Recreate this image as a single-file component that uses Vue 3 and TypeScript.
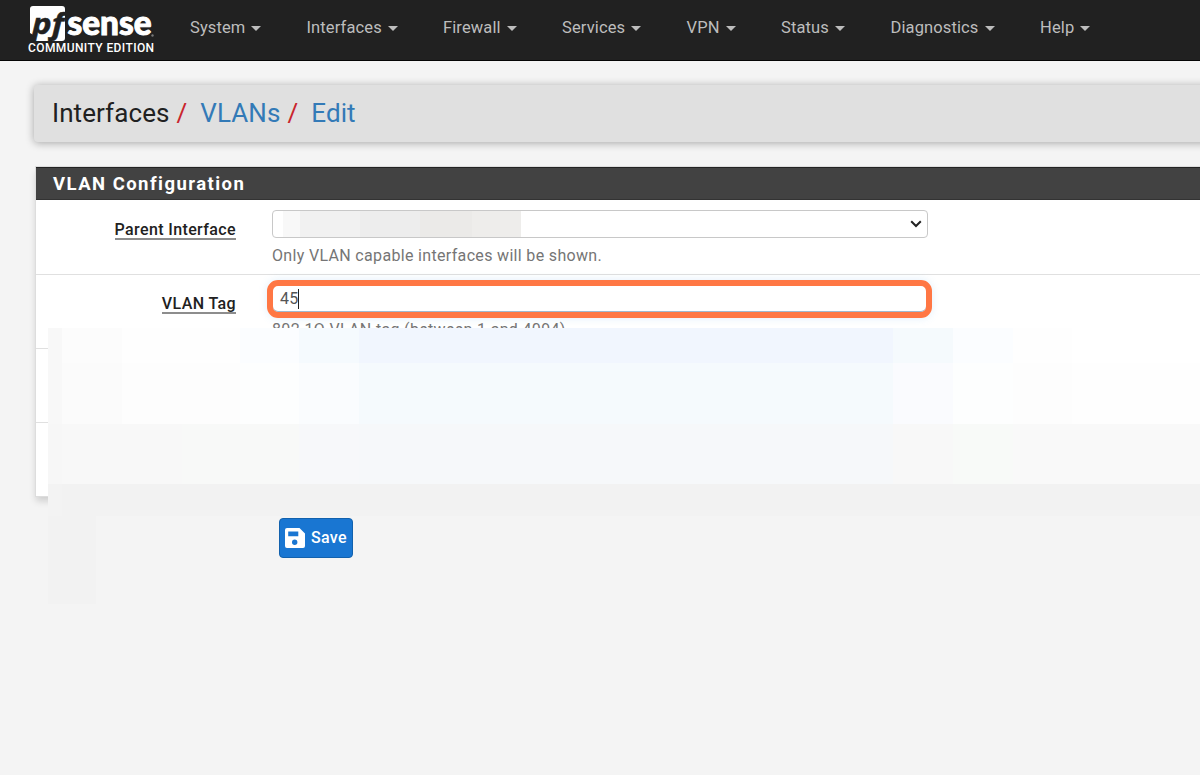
<script setup lang="ts">
const menu: string[] = ['System', 'Interfaces', 'Firewall', 'Services', 'VPN', 'Status', 'Diagnostics', 'Help']

// Colours of the redaction mosaic, one list per row of cells
const mosaic: string[][] = [
  ['#f8f8f8', '#fcfcfc', '#fefefe', '#fefefe', '#fbfdff', '#f5fafe', '#f1f6fe', '#f5fafd', '#fbfdff', '#fefefe', '#ffffff'],
  ['#f8f8f8', '#fbfbfb', '#fdfdfd', '#fdfdfd', '#fdfefe', '#fafcfe', '#f5fafd', '#fafbfe', '#fdfefe', '#fdfdfd', '#fefefe'],
  ['#f7f7f7', '#f8f8f8', '#f8f8f8', '#f8f9f8', '#f8f9f8', '#f7f8fa', '#f6f8fa', '#f8f8f8', '#f8faf8', '#f9f9f9', '#f9f9f9'],
  ['#f3f3f3', '#f2f2f2', '#f2f2f2', '#f2f2f2', '#f2f2f2', '#f2f2f2', '#f2f2f2', '#f2f2f2', '#f2f2f2', '#f2f2f2', '#f2f2f2'],
]
const cells: string[] = mosaic.flat()
</script>

<template>
  <div class="page">
    <header class="navbar">
      <div class="brand">
        <svg class="logo" width="130" height="36" viewBox="0 0 130 36">
          <path d="M5 0H34Q37 0 37 3V32Q37 35 34 35H6L7 30L2 27V3Q2 0 5 0Z" fill="#fff" />
          <text class="pf" x="4" y="28" textLength="32" lengthAdjust="spacingAndGlyphs">pf</text>
          <text class="sense" x="39.500" y="28.500" textLength="84" lengthAdjust="spacingAndGlyphs">sense</text>
          <circle cx="124.500" cy="29.500" r="1.200" fill="#777" />
        </svg>
        <span class="edition">COMMUNITY EDITION</span>
      </div>
      <nav class="menu">
        <a v-for="item in menu" :key="item" class="menu-item">{{ item }}<i class="caret"></i></a>
      </nav>
    </header>

    <div class="breadcrumb">
      <span>Interfaces</span><span class="slash">/</span><a>VLANs</a><span class="slash">/</span><a>Edit</a>
    </div>

    <section class="panel">
      <h2 class="panel-title">VLAN Configuration</h2>
      <div class="row">
        <div class="label"><span>Parent Interface</span></div>
        <div class="field">
          <div class="select">
            <div class="masked"><i></i><i></i><i></i><i></i><i></i></div>
            <svg width="12" height="8" viewBox="0 0 12 8"><path d="M1.2 1.2L6 6L10.8 1.2" fill="none" stroke="#222" stroke-width="2" /></svg>
          </div>
          <p class="help">Only VLAN capable interfaces will be shown.</p>
        </div>
      </div>
      <div class="row">
        <div class="label"><span>VLAN Tag</span></div>
        <div class="field">
          <div class="input"><span>45</span><i class="cursor"></i></div>
          <p class="help tag-help">802.1Q VLAN tag (between 1 and 4094).</p>
        </div>
      </div>
      <div class="row"></div>
      <div class="row"></div>
    </section>

    <div class="mosaic">
      <i v-for="(color, index) in cells" :key="index" :style="{ background: color }"></i>
    </div>
    <div class="mosaic-tail"></div>

    <button class="save">
      <svg width="20" height="20" viewBox="0 0 20 20">
        <path fill="#fff" fill-rule="evenodd" d="M2 0H14.5L20 5.500V18Q20 20 18 20H2Q0 20 0 18V2Q0 0 2 0ZM3.200 3.500V8.300H13.300V3.500ZM9.700 11.500A2.700 2.700 0 1 0 9.700 16.900A2.700 2.700 0 1 0 9.700 11.500Z" />
      </svg>
      <span>Save</span>
    </button>
  </div>
</template>

<style>
body {
  margin: 0;
  background: #f4f4f4;
}
</style>

<style scoped>
* {
  box-sizing: border-box;
}
.page {
  position: relative;
  height: 775px;
  overflow: hidden;
  background: #f4f4f4;
  font-family: Roboto, sans-serif;
  font-size: 16px;
  color: #212121;
}
.navbar {
  display: flex;
  height: 61px;
  background: #212121;
  border-bottom: 1px solid #050505;
}
.brand {
  width: 190px;
  padding: 6px 0 0 28px;
}
.logo {
  display: block;
  overflow: visible;
}
.pf {
  font: italic 700 29px "Open Sans", sans-serif;
  fill: #212121;
  stroke: #212121;
  stroke-width: 0.5px;
}
.sense {
  font: 900 34px Lato, sans-serif;
  fill: #fff;
  stroke: #fff;
  stroke-width: 1px;
}
.edition {
  display: block;
  font-size: 12px;
  line-height: 12px;
  font-weight: 500;
  letter-spacing: 0.4px;
  white-space: nowrap;
  color: #fff;
}
.menu {
  display: grid;
  grid-template-columns: 116.5px 136.5px 119px 124.5px 94.5px 109.5px 149.5px 80px;
  height: 55px;
  align-items: center;
}
.menu-item {
  display: flex;
  align-items: center;
  color: #bdbdbd;
  font-size: 16.5px;
  letter-spacing: 0.12px;
}
.caret {
  margin: 1px 0 0 6px;
  border: 5px solid transparent;
  border-top-color: #bdbdbd;
  border-bottom: 0;
}
.breadcrumb {
  display: flex;
  align-items: center;
  width: 1180px;
  height: 57px;
  margin: 24px 0 0 34px;
  padding: 0 0 2px 18px;
  border-radius: 4px;
  background: #e0e0e0;
  box-shadow: 0 1px 9px rgba(0, 0, 0, 0.33);
  font-size: 26px;
  letter-spacing: 0.08px;
}
.breadcrumb a {
  color: #337ab7;
}
.slash {
  margin: 0 13px 0 7px;
  color: #c9252d;
}
.panel {
  width: 1180px;
  height: 331px;
  margin: 24px 0 0 35px;
  border: 1px solid #ddd;
  background: #fff;
  box-shadow: 0 5px 7px -1px rgba(0, 0, 0, 0.16);
}
.panel-title {
  height: 33px;
  margin: 0;
  padding-left: 17px;
  background: #424242;
  border-top: 1px solid #222;
  border-bottom: 1px solid #333;
  color: #fff;
  font-size: 18.5px;
  font-weight: 700;
  line-height: 32px;
  letter-spacing: 1.46px;
}
.row {
  display: flex;
  height: 74px;
  padding-top: 9px;
  border-bottom: 1px solid #e0e0e0;
}
.panel-title + .row {
  height: 75px;
  padding-top: 10px;
}
.row:last-child {
  border-bottom: 0;
}
.label {
  width: 200px;
  padding-top: 10px;
  text-align: right;
}
.label span {
  display: inline-block;
  border-bottom: 2px solid #8d8d8d;
  font-weight: 500;
  line-height: 17px;
  letter-spacing: 0.38px;
}
.field {
  width: 656px;
  margin-left: 36px;
}
.select {
  display: flex;
  justify-content: space-between;
  align-items: center;
  height: 28px;
  padding: 0 5px 0 10px;
  border: 1px solid #c8c8c8;
  border-radius: 4px;
}
.masked {
  display: grid;
  grid-template-columns: 17px 60px 60px 52px 49px;
  height: 26px;
}
.masked i:nth-child(1) { background: #f8f8f8; }
.masked i:nth-child(2) { background: #f1f1f1; }
.masked i:nth-child(3) { background: #ededed; }
.masked i:nth-child(4) { background: #ebeae8; }
.masked i:nth-child(5) { background: #eeedeb; }
.help {
  margin: 8px 0 0;
  color: #757575;
  font-size: 16px;
  line-height: 19px;
  letter-spacing: 0.33px;
}
.input {
  display: flex;
  align-items: center;
  width: 665px;
  height: 38px;
  margin: -4px 0 0 -5px;
  padding: 0 0 1px 7px;
  border: 6px solid #ff7744;
  border-radius: 11px;
  box-shadow: 0 0 8px rgba(102, 175, 233, 0.2), inset 0 -1px 0 #9fb9cf;
  color: #555;
  letter-spacing: 0.33px;
}
.cursor {
  width: 1px;
  height: 20px;
  margin-left: -1px;
  background: #222;
}
.tag-help {
  margin-top: 2px;
}
.mosaic {
  position: absolute;
  top: 328px;
  left: 48px;
  width: 1152px;
  display: grid;
  grid-template-columns: 14px 60px 60px 58px 59px 60px 534px 60px 60px 59px 128px;
  grid-template-rows: 35px 61px 60px 32px;
}
.mosaic-tail {
  position: absolute;
  top: 516px;
  left: 48px;
  width: 48px;
  height: 88px;
  background: #f2f2f2;
}
.save {
  display: flex;
  align-items: center;
  width: 74px;
  height: 40px;
  margin: 21px 0 0 279px;
  padding: 0 0 0 5px;
  border: 1px solid #1261ad;
  border-radius: 4px;
  background: #1976d2;
  color: #fff;
  font-family: Roboto, sans-serif;
  font-size: 16px;
  font-weight: 500;
}
.save span {
  margin: 0 0 2px 6px;
  letter-spacing: 0.3px;
}
</style>
